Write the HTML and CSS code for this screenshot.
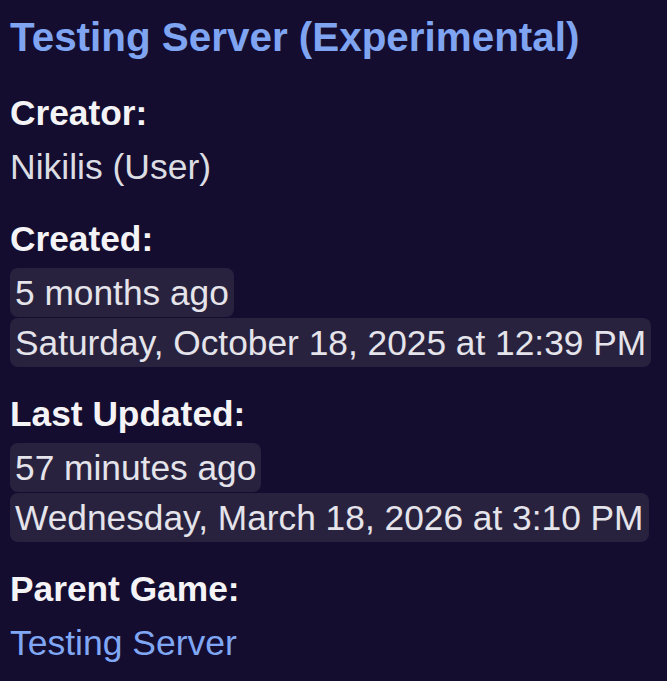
FILE: index.html
```html
<!DOCTYPE html>
<html lang="en">
<head>
<meta charset="utf-8">
<title>Testing Server (Experimental)</title>
<link rel="stylesheet" href="styles.css">
</head>
<body>
<div class="embed">
  <div class="title">Testing Server (Experimental)</div>
  <div class="field">
    <div class="field-name">Creator:</div>
    <div class="field-value">Nikilis (User)</div>
  </div>
  <div class="field">
    <div class="field-name">Created:</div>
    <div class="stamps">
      <div class="stamp-row"><span class="stamp">5 months ago</span></div>
      <div class="stamp-row"><span class="stamp">Saturday, October 18, 2025 at 12:39 PM</span></div>
    </div>
  </div>
  <div class="field">
    <div class="field-name">Last Updated:</div>
    <div class="stamps">
      <div class="stamp-row"><span class="stamp">57 minutes ago</span></div>
      <div class="stamp-row"><span class="stamp">Wednesday, March 18, 2026 at 3:10 PM</span></div>
    </div>
  </div>
  <div class="field">
    <div class="field-name">Parent Game:</div>
    <div class="field-value"><a class="link" href="#">Testing Server</a></div>
  </div>
</div>
</body>
</html>
```

FILE: styles.css
```css
html, body {
  margin: 0;
  padding: 0;
  background: #140d30;
}
body {
  font-family: "Liberation Sans", Arial, sans-serif;
  color: #dcdde3;
}
.embed {
  padding: 12px 0 0 10px;
  display: flex;
  flex-direction: column;
  gap: 22px;
}
.title {
  font-size: 40.4px;
  font-weight: 700;
  line-height: 50px;
  color: #7fa5f2;
  margin-bottom: 4px;
  white-space: nowrap;
}
.field {
  display: flex;
  flex-direction: column;
  gap: 4px;
}
.field-name {
  font-size: 35.3px;
  font-weight: 700;
  line-height: 50px;
  color: #f4f4f7;
}
.field-value {
  font-size: 35.5px;
  line-height: 50px;
  color: #dcdde3;
}
.stamps {
  display: flex;
  flex-direction: column;
  gap: 1px;
}
.stamp-row {
  display: flex;
}
.stamp {
  font-size: 35.3px;
  line-height: 49px;
  padding: 0 5px;
  border-radius: 8px;
  background: #29223f;
  color: #e4e4ea;
  white-space: nowrap;
}
.link {
  color: #80a7f4;
  text-decoration: none;
}
```
